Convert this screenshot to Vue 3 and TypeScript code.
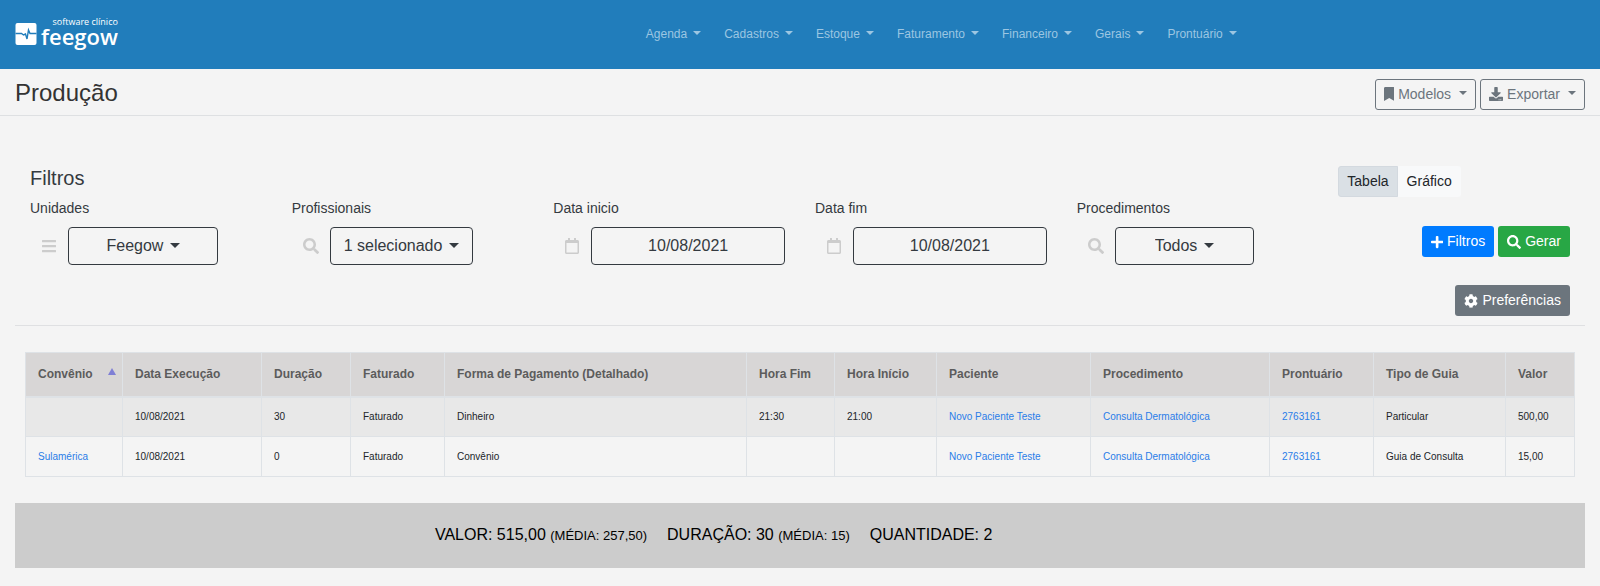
<script setup lang="ts">
import { ref } from 'vue'

type IconName = 'bookmark' | 'download' | 'search' | 'plus' | 'cog' | 'calendar' | 'bars'

interface Icon {
  width: number
  path: string
}

interface Field {
  id: string
  label: string
  icon: IconName
  kind: 'select' | 'date'
  value: string
  size: string
}

interface Row {
  convenio: string
  data: string
  duracao: string
  faturado: string
  forma: string
  fim: string
  inicio: string
  paciente: string
  procedimento: string
  prontuario: string
  guia: string
  valor: string
}

interface Column {
  key: keyof Row
  title: string
  link?: boolean
}

const icons: Record<IconName, Icon> = {
  bookmark: {
    width: 384,
    path: 'M0 512V48C0 21.49 21.49 0 48 0h288c26.51 0 48 21.49 48 48v464L192 400 0 512z',
  },
  download: {
    width: 512,
    path: 'M216 0h80c13.3 0 24 10.7 24 24v168h87.7c17.8 0 26.7 21.5 14.1 34.1L269.7 378.3c-7.5 7.5-19.8 7.5-27.3 0L90.1 226.1c-12.6-12.6-3.7-34.1 14.1-34.1H192V24c0-13.3 10.7-24 24-24zm296 376v112c0 13.3-10.7 24-24 24H24c-13.3 0-24-10.7-24-24V376c0-13.3 10.7-24 24-24h146.7l49 49c20.1 20.1 52.5 20.1 72.6 0l49-49H488c13.3 0 24 10.7 24 24zm-124 88c0-11-9-20-20-20s-20 9-20 20 9 20 20 20 20-9 20-20zm64 0c0-11-9-20-20-20s-20 9-20 20 9 20 20 20 20-9 20-20z',
  },
  search: {
    width: 512,
    path: 'M505 442.7L405.3 343c-4.5-4.5-10.6-7-17-7H372c27.6-35.3 44-79.7 44-128C416 93.1 322.9 0 208 0S0 93.1 0 208s93.1 208 208 208c48.3 0 92.7-16.4 128-44v16.3c0 6.4 2.5 12.5 7 17l99.7 99.7c9.4 9.4 24.6 9.4 33.9 0l28.3-28.3c9.4-9.4 9.4-24.6.1-34zM208 336c-70.7 0-128-57.2-128-128 0-70.7 57.2-128 128-128 70.7 0 128 57.2 128 128 0 70.7-57.2 128-128 128z',
  },
  plus: {
    width: 448,
    path: 'M416 208H272V64c0-17.67-14.33-32-32-32h-32c-17.67 0-32 14.33-32 32v144H32c-17.67 0-32 14.33-32 32v32c0 17.67 14.33 32 32 32h144v144c0 17.67 14.33 32 32 32h32c17.67 0 32-14.33 32-32V304h144c17.67 0 32-14.33 32-32v-32c0-17.67-14.33-32-32-32z',
  },
  cog: {
    width: 512,
    path: 'M487.4 315.7l-42.6-24.6c4.3-23.2 4.3-47 0-70.2l42.6-24.6c4.9-2.8 7.1-8.6 5.5-14-11.1-35.6-30-67.8-54.7-94.6-3.8-4.1-10-5.1-14.8-2.3L380.8 110c-17.9-15.4-38.5-27.3-60.8-35.1V25.8c0-5.6-3.9-10.5-9.4-11.7-36.7-8.2-74.3-7.8-109.2 0-5.5 1.2-9.4 6.1-9.4 11.7V75c-22.2 7.9-42.8 19.8-60.8 35.1L88.7 85.5c-4.9-2.8-11-1.9-14.8 2.3-24.7 26.7-43.6 58.9-54.7 94.6-1.7 5.4.6 11.2 5.5 14L67.3 221c-4.3 23.2-4.3 47 0 70.2l-42.6 24.6c-4.9 2.8-7.1 8.6-5.5 14 11.1 35.6 30 67.8 54.7 94.6 3.8 4.1 10 5.1 14.8 2.3l42.6-24.6c17.9 15.4 38.5 27.3 60.8 35.1v49.2c0 5.6 3.9 10.5 9.4 11.7 36.7 8.2 74.3 7.8 109.2 0 5.5-1.2 9.4-6.1 9.4-11.7v-49.2c22.2-7.9 42.8-19.8 60.8-35.1l42.6 24.6c4.9 2.8 11 1.9 14.8-2.3 24.7-26.7 43.6-58.9 54.7-94.6 1.5-5.5-.7-11.3-5.6-14.1zM256 336c-44.1 0-80-35.9-80-80s35.9-80 80-80 80 35.9 80 80-35.9 80-80 80z',
  },
  calendar: {
    width: 448,
    path: 'M400 64h-48V12c0-6.6-5.4-12-12-12h-40c-6.6 0-12 5.4-12 12v52H160V12c0-6.6-5.4-12-12-12h-40c-6.6 0-12 5.4-12 12v52H48C21.5 64 0 85.5 0 112v352c0 26.5 21.5 48 48 48h352c26.5 0 48-21.5 48-48V112c0-26.5-21.5-48-48-48zm-6 400H54c-3.3 0-6-2.7-6-6V160h352v298c0 3.3-2.7 6-6 6z',
  },
  bars: {
    width: 448,
    path: 'M16 60h416q16 0 16 16v40q0 16-16 16H16q-16 0-16-16V76q0-16 16-16zM16 220h416q16 0 16 16v40q0 16-16 16H16q-16 0-16-16v-40q0-16 16-16zM16 380h416q16 0 16 16v40q0 16-16 16H16q-16 0-16-16v-40q0-16 16-16z',
  },
}

const box = (name: IconName): string => `0 0 ${icons[name].width} 512`

const menus: string[] = ['Agenda', 'Cadastros', 'Estoque', 'Faturamento', 'Financeiro', 'Gerais', 'Prontuário']

const fields = ref<Field[]>([
  { id: 'unidades', label: 'Unidades', icon: 'bars', kind: 'select', value: 'Feegow', size: 'unit' },
  { id: 'profissionais', label: 'Profissionais', icon: 'search', kind: 'select', value: '1 selecionado', size: 'pro' },
  { id: 'inicio', label: 'Data inicio', icon: 'calendar', kind: 'date', value: '10/08/2021', size: 'date' },
  { id: 'fim', label: 'Data fim', icon: 'calendar', kind: 'date', value: '10/08/2021', size: 'date' },
  { id: 'procedimentos', label: 'Procedimentos', icon: 'search', kind: 'select', value: 'Todos', size: 'proc' },
])

const views = ['Tabela', 'Gráfico']
const view = ref('Tabela')

const columns: Column[] = [
  { key: 'convenio', title: 'Convênio', link: true },
  { key: 'data', title: 'Data Execução' },
  { key: 'duracao', title: 'Duração' },
  { key: 'faturado', title: 'Faturado' },
  { key: 'forma', title: 'Forma de Pagamento (Detalhado)' },
  { key: 'fim', title: 'Hora Fim' },
  { key: 'inicio', title: 'Hora Início' },
  { key: 'paciente', title: 'Paciente', link: true },
  { key: 'procedimento', title: 'Procedimento', link: true },
  { key: 'prontuario', title: 'Prontuário', link: true },
  { key: 'guia', title: 'Tipo de Guia' },
  { key: 'valor', title: 'Valor' },
]

const rows: Row[] = [
  {
    convenio: '', data: '10/08/2021', duracao: '30', faturado: 'Faturado', forma: 'Dinheiro',
    fim: '21:30', inicio: '21:00', paciente: 'Novo Paciente Teste',
    procedimento: 'Consulta Dermatológica', prontuario: '2763161', guia: 'Particular', valor: '500,00',
  },
  {
    convenio: 'Sulamérica', data: '10/08/2021', duracao: '0', faturado: 'Faturado', forma: 'Convênio',
    fim: '', inicio: '', paciente: 'Novo Paciente Teste',
    procedimento: 'Consulta Dermatológica', prontuario: '2763161', guia: 'Guia de Consulta', valor: '15,00',
  },
]
</script>

<template>
  <div class="page">
    <header class="navbar">
      <a class="brand" href="#" aria-label="feegow software clínico">
        <svg class="brand-mark" viewBox="0 0 21 22" aria-hidden="true">
          <rect width="21" height="22" rx="2" fill="#fff" />
          <path d="M0 10.500h6l2 1.500 2-1 1.500 5 1.500-9 1.500 3.500H21" fill="none" stroke="#217dbb" stroke-width="1.400" />
        </svg>
        <span class="brand-text">
          <span class="brand-tag">software clínico</span>
          <span class="brand-name">feegow</span>
        </span>
      </a>
      <nav class="menu">
        <a v-for="item in menus" :key="item" class="menu-link" href="#">{{ item }}<span class="caret"></span></a>
      </nav>
    </header>

    <div class="titlebar">
      <h1>Produção</h1>
      <div class="buttons">
        <button type="button" class="btn outline" aria-haspopup="true">
          <svg class="icon" :viewBox="box('bookmark')"><path :d="icons.bookmark.path" /></svg>
          Modelos<span class="caret wide"></span>
        </button>
        <button type="button" class="btn outline" aria-haspopup="true">
          <svg class="icon" :viewBox="box('download')"><path :d="icons.download.path" /></svg>
          Exportar<span class="caret wide"></span>
        </button>
      </div>
    </div>

    <main class="content">
      <form class="filters" @submit.prevent>
        <h2>Filtros</h2>
        <div class="toggle" role="group" aria-label="Visualização">
          <button
            v-for="name in views"
            :key="name"
            type="button"
            class="btn light"
            :class="{ active: view === name }"
            :aria-pressed="view === name"
            @click="view = name"
          >{{ name }}</button>
        </div>

        <div v-for="field in fields" :key="field.id" class="field">
          <label :for="field.id">{{ field.label }}</label>
          <div class="group">
            <span class="addon">
              <svg class="icon" :viewBox="box(field.icon)"><path :d="icons[field.icon].path" /></svg>
            </span>
            <div v-if="field.kind === 'select'" class="control" :class="field.size">
              <select :id="field.id" v-model="field.value">
                <option>{{ field.value }}</option>
              </select>
              <span class="caret"></span>
            </div>
            <input v-else :id="field.id" v-model="field.value" type="text" class="control" :class="field.size" />
          </div>
        </div>
        <div class="buttons actions">
          <button type="button" class="btn blue">
            <svg class="icon" :viewBox="box('plus')"><path :d="icons.plus.path" /></svg>
            Filtros
          </button>
          <button type="submit" class="btn green">
            <svg class="icon" :viewBox="box('search')"><path :d="icons.search.path" /></svg>
            Gerar
          </button>
        </div>

        <div class="preferences">
          <button type="button" class="btn gray">
            <svg class="icon" :viewBox="box('cog')"><path :d="icons.cog.path" /></svg>
            Preferências
          </button>
        </div>
      </form>

      <table class="report">
        <colgroup>
          <col v-for="column in columns" :key="column.key" :class="'col-' + column.key" />
        </colgroup>
        <thead>
          <tr>
            <th v-for="column in columns" :key="column.key" scope="col">
              <span class="head">{{ column.title }}<span v-if="column.key === 'convenio'" class="sort"></span></span>
            </th>
          </tr>
        </thead>
        <tbody>
          <tr v-for="(row, index) in rows" :key="index">
            <td v-for="column in columns" :key="column.key">
              <a v-if="column.link && row[column.key]" href="#">{{ row[column.key] }}</a>
              <template v-else>{{ row[column.key] }}</template>
            </td>
          </tr>
        </tbody>
      </table>

      <div class="summary">
        <span>VALOR: 515,00 <small>(MÉDIA: 257,50)</small></span>
        <span>DURAÇÃO: 30 <small>(MÉDIA: 15)</small></span>
        <span>QUANTIDADE: 2</span>
      </div>
    </main>
  </div>
</template>

<style>
body {
  background: #f4f4f4;
}
</style>

<style scoped>
.page,
.page * {
  box-sizing: border-box;
}

.page {
  padding-bottom: 19px;
  background: #f4f4f4;
  color: #343a40;
  font-family: "Liberation Sans", Arial, sans-serif;
  font-size: 14px;
  line-height: 21px;
}

a {
  color: #2a7de8;
  text-decoration: none;
}

button,
select,
input {
  margin: 0;
  color: inherit;
  font: inherit;
}

.navbar {
  display: flex;
  align-items: center;
  height: 69px;
  padding: 0 15px 2px;
  background: #217dbb;
}

.brand {
  display: flex;
  align-items: center;
  gap: 4px;
  width: 18%;
  color: #fff;
  font-family: "Open Sans", "Noto Sans", sans-serif;
}

.brand-mark {
  width: 22px;
  height: 22px;
}

.brand-text {
  display: flex;
  flex-direction: column;
  padding-bottom: 4px;
}

.brand-tag {
  align-self: flex-end;
  font-size: 9px;
  line-height: 8px;
}

.brand-name {
  font-size: 22px;
  font-weight: 600;
  line-height: 20px;
}

.menu {
  display: flex;
  flex: 1;
  justify-content: center;
  gap: 23px;
}

.menu-link {
  display: flex;
  align-items: center;
  color: #9cc6e2;
  font-size: 12px;
  line-height: 18px;
}

.caret {
  flex: none;
  margin-left: 6px;
  margin-bottom: 2px;
  border: 4px solid transparent;
  border-top-color: currentColor;
  border-bottom: 0;
}

.caret.wide {
  margin-left: 4px;
}

.titlebar {
  display: flex;
  align-items: center;
  justify-content: space-between;
  height: 47px;
  padding: 4px 15px 0;
  border-bottom: 1px solid #dee0e2;
}

h1 {
  margin: 0;
  padding-bottom: 2px;
  color: #333;
  font-size: 24px;
  font-weight: 400;
  line-height: 28px;
}

.buttons {
  display: flex;
  gap: 4px;
}

.btn {
  display: inline-flex;
  align-items: center;
  gap: 4px;
  height: 31px;
  padding: 0 8px;
  border: 1px solid transparent;
  border-radius: 3px;
  background: none;
  white-space: nowrap;
  cursor: pointer;
}

.icon {
  flex: none;
  height: 14px;
  fill: currentColor;
}

.outline {
  border-color: #6c757d;
  color: #6c757d;
}

.blue {
  background: #007bff;
  color: #fff;
}

.green {
  background: #28a745;
  color: #fff;
}

.gray {
  background: #6c757d;
  color: #fff;
}

.light {
  background: #f8f9fa;
  color: #212529;
}

.light:first-child {
  border-radius: 3px 0 0 3px;
}

.light:last-child {
  border-radius: 0 3px 3px 0;
}

.light.active {
  border-color: #d3d9df;
  background: #dae0e5;
}

.content {
  padding: 50px 15px 0;
}

.filters {
  display: grid;
  grid-template-columns: repeat(6, minmax(0, 1fr));
  padding-bottom: 9px;
  border-bottom: 1px solid #dfe0e2;
}

h2 {
  grid-column: span 5;
  margin: 0;
  padding-left: 15px;
  font-size: 20px;
  font-weight: 400;
  line-height: 24px;
}

.toggle {
  display: flex;
  padding: 0 15px 1px;
}

.field {
  padding: 0 15px;
}

label {
  display: block;
  margin-bottom: 8px;
}

.group {
  display: flex;
}

.addon {
  display: flex;
  align-items: center;
  justify-content: center;
  flex: none;
  width: 38px;
  color: #ccc;
}

.addon .icon {
  height: 16px;
}

.control {
  display: flex;
  align-items: center;
  justify-content: center;
  height: 38px;
  border: 1px solid #343a40;
  border-radius: 4px;
  background: transparent;
  font-size: 16px;
  text-align: center;
}

.control select {
  padding: 0 0 2px;
  border: 0;
  background: transparent;
  appearance: none;
}

.control .caret {
  border-width: 5px 5px 0;
}

.unit {
  width: 150px;
}

.pro {
  width: 143px;
}

.date {
  flex: 1;
  min-width: 0;
}

.proc {
  width: 139px;
}

.actions {
  align-self: end;
  justify-content: flex-end;
  padding: 0 15px 8px 0;
}

.preferences {
  display: flex;
  grid-column: 1 / -1;
  justify-content: flex-end;
  padding: 20px 15px 0 0;
}

.report {
  width: calc(100% - 20px);
  margin: 26px 10px;
  border-collapse: collapse;
  table-layout: fixed;
}

th,
td {
  padding: 0 12px;
  border: 1px solid #dee2e6;
  text-align: left;
  white-space: nowrap;
}

th {
  height: 44px;
  border-bottom-width: 2px;
  background: #d8d6d6;
  color: #5c5c5c;
  font-size: 12px;
}

.head {
  display: flex;
  align-items: center;
  justify-content: space-between;
}

.sort {
  margin: 0 -6px 6px 0;
  border: 4px solid transparent;
  border-top: 0;
  border-bottom: 7px solid #7f7fd5;
}

td {
  height: 40px;
  color: #212529;
  font-size: 10px;
}

tbody tr:nth-child(odd) {
  background: #e8e8e8;
}

.col-convenio { width: 97px; }
.col-data { width: 139px; }
.col-duracao { width: 89px; }
.col-faturado { width: 94px; }
.col-fim { width: 88px; }
.col-inicio { width: 102px; }
.col-paciente { width: 154px; }
.col-procedimento { width: 179px; }
.col-prontuario { width: 104px; }
.col-guia { width: 132px; }
.col-valor { width: 69px; }

.summary {
  display: flex;
  justify-content: center;
  gap: 20px;
  padding: 20px 11% 20px 0;
  background: #ccc;
  color: #000;
  font-size: 16px;
  line-height: 24px;
}

.summary small {
  font-size: 13px;
}
</style>
